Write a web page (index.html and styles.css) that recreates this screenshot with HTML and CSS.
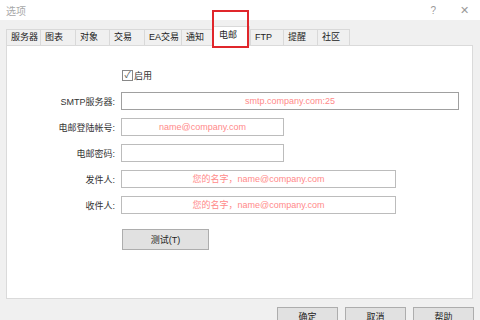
FILE: index.html
```html
<!DOCTYPE html>
<html lang="zh">
  <head>
    <meta charset="UTF-8" />
    <title>选项</title>
    <link rel="stylesheet" href="styles.css">
  </head>
  <body>
    <div class="titlebar">
      <span class="title">选项</span>
      <span class="help">?</span>
      <span class="close">✕</span>
    </div>

    <div class="tabs">
      <div class="tab w34">服务器</div>
      <div class="tab w35">图表</div>
      <div class="tab w34">对象</div>
      <div class="tab w35">交易</div>
      <div class="tab w37">EA交易</div>
      <div class="tab w31">通知</div>
      <div class="tab active">电邮</div>
      <div class="tab w33">FTP</div>
      <div class="tab w34">提醒</div>
      <div class="tab w33">社区</div>
      <div class="mark"></div>
    </div>

    <div class="panel">
      <div class="form">
        <span></span>
        <label class="check"><span class="box">✓</span>启用</label>

        <span class="label">SMTP服务器:</span>
        <div class="field long dark">smtp.company.com:25</div>

        <span class="label">电邮登陆帐号:</span>
        <div class="field short">name@company.com</div>

        <span class="label">电邮密码:</span>
        <div class="field short"></div>

        <span class="label">发件人:</span>
        <div class="field mid">您的名字，name@company.com</div>

        <span class="label">收件人:</span>
        <div class="field mid">您的名字，name@company.com</div>

        <span></span>
        <div class="test-row"><button class="btn test">测试(T)</button></div>
      </div>
    </div>

    <div class="footer">
      <button class="btn">确定</button>
      <button class="btn">取消</button>
      <button class="btn">帮助</button>
    </div>
  </body>
</html>
```

FILE: styles.css
```css
body {
  margin: 0;
  width: 480px;
  height: 320px;
  overflow: hidden;
  background: #f0f0f0;
  font-family: "Liberation Sans", "Noto Sans CJK SC", sans-serif;
  font-size: 9px;
  color: #222;
}

.titlebar {
  height: 20px;
  background: #fff;
  display: flex;
  align-items: center;
  padding: 0 11px 0 6px;
}

.title {
  color: #a8a8a8;
  font-size: 10px;
  flex: 1;
}

.help {
  color: #999;
  font-size: 10px;
  margin-right: 24px;
}

.close {
  color: #999;
  font-size: 11px;
}

.tabs {
  position: relative;
  display: flex;
  align-items: flex-end;
  margin-top: 5px;
  padding-left: 6px;
  height: 20px;
}

.tab {
  box-sizing: border-box;
  height: 16px;
  line-height: 15px;
  padding-left: 4px;
  border: 1px solid #d9d9d9;
  border-right: none;
  border-bottom: none;
  white-space: nowrap;
}

.tab.w31 { width: 31px; }
.tab.w33 { width: 33px; }
.tab.w34 { width: 34px; }
.tab.w35 { width: 35px; }
.tab.w37 { width: 37px; }

.tab:nth-last-child(2) {
  border-right: 1px solid #d9d9d9;
}

.tab.active {
  width: 38px;
  height: 20px;
  line-height: 17px;
  padding-left: 6px;
  background: #fff;
  border-right: 1px solid #d9d9d9;
  margin-bottom: -1px;
  position: relative;
  z-index: 1;
}

.mark {
  position: absolute;
  left: 212px;
  top: -15px;
  width: 33px;
  height: 34px;
  border: 2px solid #e0262b;
  z-index: 2;
}

.panel {
  box-sizing: border-box;
  margin: 0 7px 0 6px;
  height: 254px;
  background: #fff;
  border: 1px solid #dadada;
  padding-top: 21px;
}

.form {
  display: grid;
  grid-template-columns: 108px auto;
  column-gap: 6px;
  row-gap: 8px;
  align-items: center;
}

.label {
  text-align: right;
  color: #333;
}

.check {
  display: flex;
  align-items: center;
  height: 17px;
  color: #333;
}

.box {
  box-sizing: border-box;
  width: 11px;
  height: 11px;
  border: 1px solid #888;
  font-size: 9px;
  line-height: 9px;
  text-align: center;
  color: #555;
  margin: 0 1px 0 1px;
}

.field {
  box-sizing: border-box;
  height: 18px;
  line-height: 16px;
  border: 1px solid #bcbcbc;
  color: #ff8a8a;
  text-align: center;
}

.field.dark {
  border-color: #a0a0a0;
}

.field.long { width: 338px; }
.field.short { width: 163px; }
.field.mid { width: 275px; }

.test-row {
  padding-top: 7px;
}

.btn {
  box-sizing: border-box;
  font-family: inherit;
  font-size: 9px;
  color: #222;
  background: #e1e1e1;
  border: 1px solid #adadad;
  padding: 0;
}

.btn.test {
  width: 87px;
  height: 21px;
  margin-left: 1px;
}

.footer {
  display: flex;
  justify-content: flex-end;
  gap: 7px;
  padding: 8px 6px 0 0;
}

.footer .btn {
  width: 61px;
  height: 22px;
  padding-bottom: 4px;
}
```
